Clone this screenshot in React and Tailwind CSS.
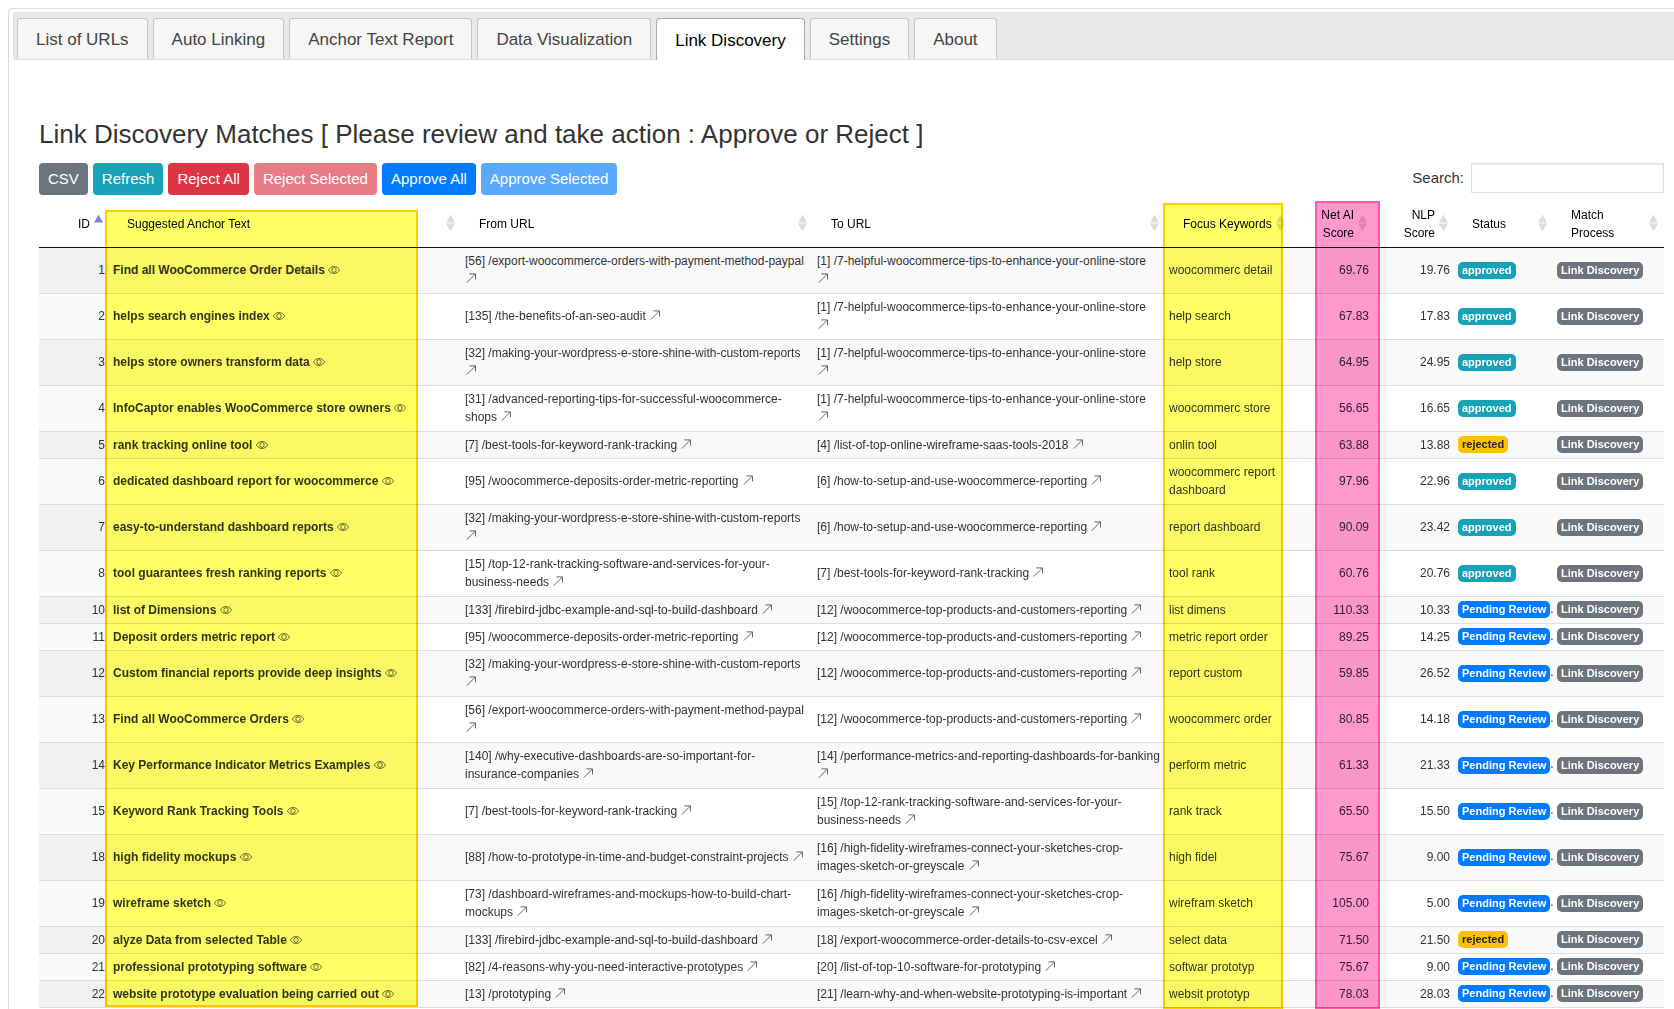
import React, { useState } from "react";

const TABS = ["List of URLs", "Auto Linking", "Anchor Text Report", "Data Visualization", "Link Discovery", "Settings", "About"];

const BUTTONS = [
  ["CSV", "bg-[#6c757d]"],
  ["Refresh", "bg-[#17a2b8]"],
  ["Reject All", "bg-[#dc3545]"],
  ["Reject Selected", "bg-[#e77c87]"],
  ["Approve All", "bg-[#007bff]"],
  ["Approve Selected", "bg-[#59a9ff]"],
];

const COLUMNS = [
  { label: "ID", align: "text-right", width: "w-[70px]", sort: "asc" },
  { label: "Suggested Anchor Text", align: "text-left", width: "" },
  { label: "From URL", align: "text-left", width: "" },
  { label: "To URL", align: "text-left", width: "" },
  { label: "Focus Keywords", align: "text-left whitespace-nowrap", width: "w-[126px]" },
  { label: "Net AI Score", align: "text-right", width: "w-[82px]" },
  { label: "NLP Score", align: "text-right", width: "w-[81px]" },
  { label: "Status", align: "text-left", width: "w-[99px]" },
  { label: "Match Process", align: "text-left", width: "w-[111px]" },
];

const ROWS = [
  [1, "Find all WooCommerce Order Details", "[56] /export-woocommerce-orders-with-payment-method-paypal", "[1] /7-helpful-woocommerce-tips-to-enhance-your-online-store", "woocommerc detail", "69.76", "19.76", "approved"],
  [2, "helps search engines index", "[135] /the-benefits-of-an-seo-audit", "[1] /7-helpful-woocommerce-tips-to-enhance-your-online-store", "help search", "67.83", "17.83", "approved"],
  [3, "helps store owners transform data", "[32] /making-your-wordpress-e-store-shine-with-custom-reports", "[1] /7-helpful-woocommerce-tips-to-enhance-your-online-store", "help store", "64.95", "24.95", "approved"],
  [4, "InfoCaptor enables WooCommerce store owners", "[31] /advanced-reporting-tips-for-successful-woocommerce-shops", "[1] /7-helpful-woocommerce-tips-to-enhance-your-online-store", "woocommerc store", "56.65", "16.65", "approved"],
  [5, "rank tracking online tool", "[7] /best-tools-for-keyword-rank-tracking", "[4] /list-of-top-online-wireframe-saas-tools-2018", "onlin tool", "63.88", "13.88", "rejected"],
  [6, "dedicated dashboard report for woocommerce", "[95] /woocommerce-deposits-order-metric-reporting", "[6] /how-to-setup-and-use-woocommerce-reporting", "woocommerc report dashboard", "97.96", "22.96", "approved"],
  [7, "easy-to-understand dashboard reports", "[32] /making-your-wordpress-e-store-shine-with-custom-reports", "[6] /how-to-setup-and-use-woocommerce-reporting", "report dashboard", "90.09", "23.42", "approved"],
  [8, "tool guarantees fresh ranking reports", "[15] /top-12-rank-tracking-software-and-services-for-your-business-needs", "[7] /best-tools-for-keyword-rank-tracking", "tool rank", "60.76", "20.76", "approved"],
  [10, "list of Dimensions", "[133] /firebird-jdbc-example-and-sql-to-build-dashboard", "[12] /woocommerce-top-products-and-customers-reporting", "list dimens", "110.33", "10.33", "pending"],
  [11, "Deposit orders metric report", "[95] /woocommerce-deposits-order-metric-reporting", "[12] /woocommerce-top-products-and-customers-reporting", "metric report order", "89.25", "14.25", "pending"],
  [12, "Custom financial reports provide deep insights", "[32] /making-your-wordpress-e-store-shine-with-custom-reports", "[12] /woocommerce-top-products-and-customers-reporting", "report custom", "59.85", "26.52", "pending"],
  [13, "Find all WooCommerce Orders", "[56] /export-woocommerce-orders-with-payment-method-paypal", "[12] /woocommerce-top-products-and-customers-reporting", "woocommerc order", "80.85", "14.18", "pending"],
  [14, "Key Performance Indicator Metrics Examples", "[140] /why-executive-dashboards-are-so-important-for-insurance-companies", "[14] /performance-metrics-and-reporting-dashboards-for-banking", "perform metric", "61.33", "21.33", "pending"],
  [15, "Keyword Rank Tracking Tools", "[7] /best-tools-for-keyword-rank-tracking", "[15] /top-12-rank-tracking-software-and-services-for-your-business-needs", "rank track", "65.50", "15.50", "pending"],
  [18, "high fidelity mockups", "[88] /how-to-prototype-in-time-and-budget-constraint-projects", "[16] /high-fidelity-wireframes-connect-your-sketches-crop-images-sketch-or-greyscale", "high fidel", "75.67", "9.00", "pending"],
  [19, "wireframe sketch", "[73] /dashboard-wireframes-and-mockups-how-to-build-chart-mockups", "[16] /high-fidelity-wireframes-connect-your-sketches-crop-images-sketch-or-greyscale", "wirefram sketch", "105.00", "5.00", "pending"],
  [20, "alyze Data from selected Table", "[133] /firebird-jdbc-example-and-sql-to-build-dashboard", "[18] /export-woocommerce-order-details-to-csv-excel", "select data", "71.50", "21.50", "rejected"],
  [21, "professional prototyping software", "[82] /4-reasons-why-you-need-interactive-prototypes", "[20] /list-of-top-10-software-for-prototyping", "softwar prototyp", "75.67", "9.00", "pending"],
  [22, "website prototype evaluation being carried out", "[13] /prototyping", "[21] /learn-why-and-when-website-prototyping-is-important", "websit prototyp", "78.03", "28.03", "pending"],
];

const STATUS = {
  approved: ["approved", "bg-[#17a2b8] text-white"],
  rejected: ["rejected", "bg-[#ffc107] text-[#212529]"],
  pending: ["Pending Review", "bg-[#007bff] text-white"],
};

const COMPACT_IDS = [5, 10, 11, 20, 21, 22];

function EyeIcon() {
  return (
    <svg viewBox="0 0 12 8" className="inline-block h-2 w-3 align-baseline" fill="none" stroke="currentColor" strokeWidth="0.7" aria-hidden="true">
      <path d="M0.4 4C1.8 1.6 3.8 0.5 6 0.5S10.2 1.6 11.6 4C10.2 6.4 8.2 7.5 6 7.5S1.8 6.4 0.4 4Z" />
      <ellipse cx="6" cy="4" rx="2.2" ry="2.4" />
    </svg>
  );
}

function ArrowIcon() {
  return (
    <svg viewBox="0 0 13 10" className="inline-block h-[10px] w-[13px] align-baseline" fill="none" stroke="currentColor" strokeWidth="0.9" aria-hidden="true">
      <path d="M1.8 9.6L10.4 1M4.4 0.9H10.5V6.4" />
    </svg>
  );
}

function SortIcon({ sort }) {
  return (
    <svg viewBox="0 0 9 17" className="absolute top-1/2 right-[6px] h-[17px] w-[9px] -translate-y-1/2" aria-hidden="true">
      {sort === "asc" ? (
        <path d="M4.5 0L9 8H0Z" fill="#7f86e0" />
      ) : (
        <path d="M4.5 0L9 8H0ZM0 9H9L4.5 17Z" fill="#dcdcdc" />
      )}
    </svg>
  );
}

function Badge({ tone, children }) {
  return <span className={`inline-block rounded-[5px] px-1 text-center align-middle text-[11px] leading-[17px] font-bold whitespace-nowrap ${tone}`}>{children}</span>;
}

function UrlCell({ text }) {
  return (
    <td className="px-1 py-1">
      {text} <a href="#open" aria-label={`Open ${text}`} className="text-[#555]"><ArrowIcon /></a>
    </td>
  );
}

export default function App() {
  const [active, setActive] = useState("Link Discovery");

  return (
    <div className="h-screen overflow-hidden bg-white pt-2 pl-2 font-['Liberation_Sans',Arial,sans-serif] text-[#333]">
      <div className="min-h-screen rounded-tl border-t border-l border-[#ddd] pt-[3px] pl-1">
        <div role="tablist" className="flex gap-[5px] rounded-l border border-r-0 border-[#ddd] bg-[#e9e9e9] pt-[5px] pl-[3px]">
          {TABS.map((tab) => (
            <button
              key={tab}
              type="button"
              role="tab"
              aria-selected={active === tab}
              onClick={() => setActive(tab)}
              className={`h-[41px] rounded-t border border-b-0 px-[18px] pt-[2px] text-[17px] leading-6 ${active === tab ? "-mb-px h-[42px] border-[#aaa] bg-white text-black" : "border-[#c5c5c5] bg-[#f6f6f6] text-[#454545]"}`}
            >
              {tab}
            </button>
          ))}
        </div>

        <main className="pt-[58px] pr-[10px] pl-[26px]">
          <h1 className="text-[26px] leading-8">Link Discovery Matches [ Please review and take action : Approve or Reject ]</h1>

          <div className="flex items-start justify-between pt-[13px]">
            <div className="flex gap-[5px]">
              {BUTTONS.map(([label, tone]) => (
                <button key={label} type="button" className={`h-8 rounded px-[9px] text-[15px] leading-5 text-white ${tone}`}>
                  {label}
                </button>
              ))}
            </div>
            <div className="flex items-center gap-[7px] text-[15px]">
              <label htmlFor="search">Search:</label>
              <input id="search" type="search" className="h-[30px] w-[193px] border border-[#ddd] bg-white px-1 shadow-[inset_0_1px_2px_rgba(0,0,0,0.07)]" />
            </div>
          </div>

          <div className="relative isolate mt-[5px]">
            <table className="w-full table-fixed border-collapse text-[12px] leading-[18px]">
              <thead>
                <tr className="border-b border-[#111] text-black">
                  {COLUMNS.map((col) => (
                    <th key={col.label} scope="col" className={`relative h-[47px] pt-[6px] pr-[19px] pb-1 pl-[18px] font-normal ${col.align} ${col.width}`}>
                      {col.label}
                      <SortIcon sort={col.sort} />
                    </th>
                  ))}
                </tr>
              </thead>
              <tbody>
                {ROWS.map(([id, anchor, from, to, keywords, net, nlp, status]) => (
                  <tr key={id} className={`group border-b border-[#ddd] odd:bg-[#f9f9f9] ${COMPACT_IDS.includes(id) ? "h-[27px]" : "h-[46px]"}`}>
                    <td className="bg-[#fafafa] px-1 py-1 text-right group-odd:bg-[#f1f1f1]">{id}</td>
                    <td className="px-1 py-1 font-bold">
                      {anchor} <EyeIcon />
                    </td>
                    <UrlCell text={from} />
                    <UrlCell text={to} />
                    <td className="px-1 py-1">{keywords}</td>
                    <td className="px-1 py-1 text-right">{net}</td>
                    <td className="px-1 py-1 text-right">{nlp}</td>
                    <td className="py-1 pl-1 leading-[17px] whitespace-nowrap">
                      <Badge tone={STATUS[status][1]}>{STATUS[status][0]}</Badge>
                      {status === "pending" && "."}
                    </td>
                    <td className="px-1 py-1 leading-[17px]">
                      <Badge tone="bg-[#6c757d] text-white">Link Discovery</Badge>
                    </td>
                  </tr>
                ))}
              </tbody>
            </table>

            <div className="pointer-events-none absolute inset-0 grid grid-cols-[70px_1fr_1fr_1fr_126px_82px_81px_99px_111px] mix-blend-multiply" aria-hidden="true">
              <div className="col-start-2 row-start-1 mt-[10px] mr-[43px] mb-px -ml-1 border-2 border-[#ffcc00] bg-[#ffff66]" />
              <div className="col-start-5 row-start-1 mt-[3px] mr-2 -mb-px -ml-[2px] border-2 border-[#ffcc00] bg-[#ffff66]" />
              <div className="col-start-6 row-start-1 mt-px -mr-[7px] -mb-px ml-6 border-2 border-[#ff55aa] bg-[#ff99cc]" />
            </div>
          </div>
        </main>
      </div>
    </div>
  );
}
